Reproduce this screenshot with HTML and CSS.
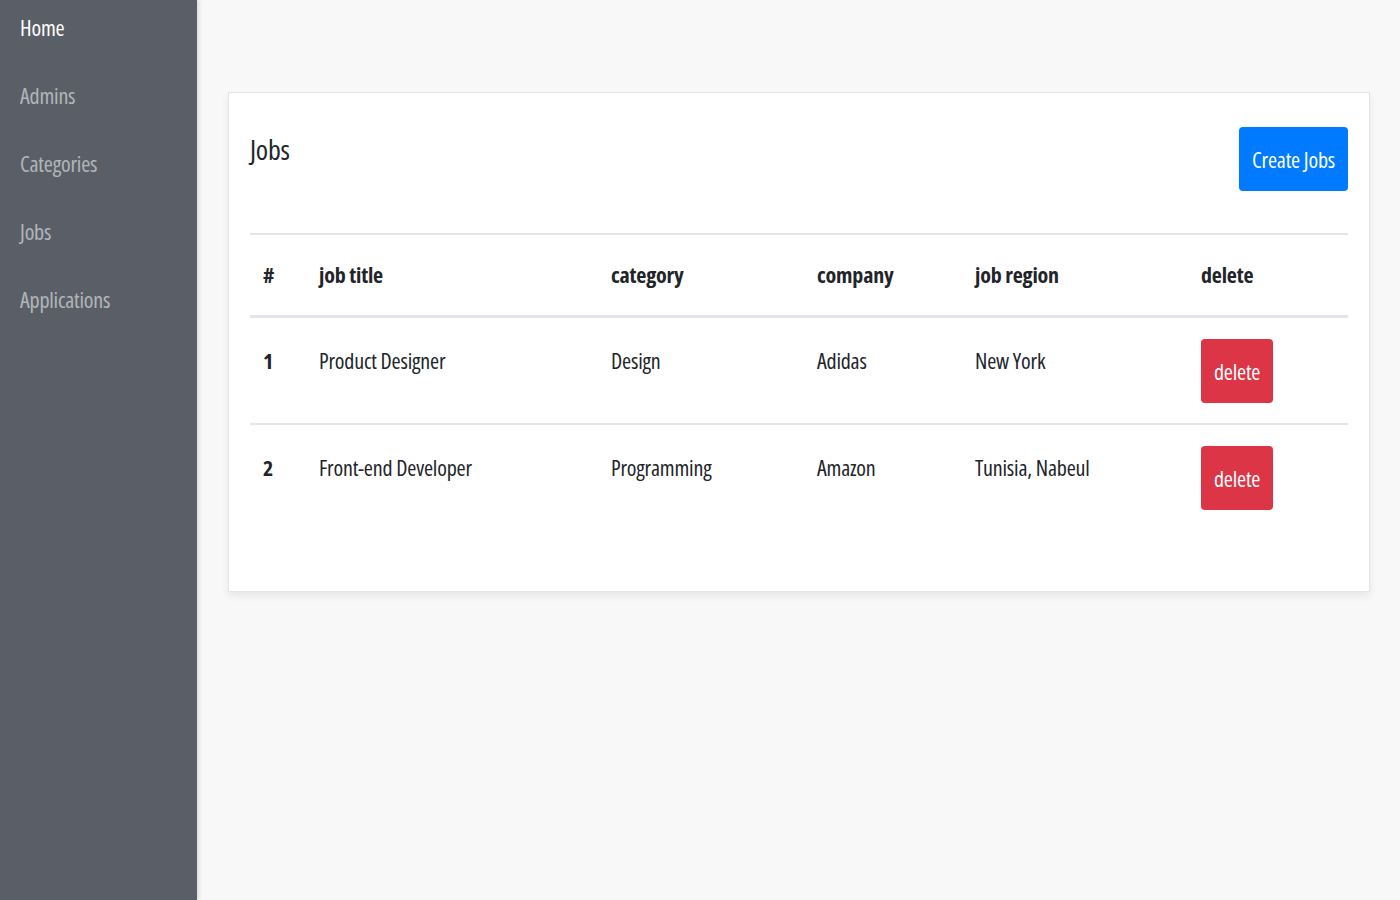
FILE: index.html
```html
<!DOCTYPE html>
<html lang="en">
<head>
<meta charset="utf-8">
<title>Jobs</title>
<link rel="stylesheet" href="styles.css">
</head>
<body>
<div class="app">
  <aside class="sidebar">
    <ul class="nav">
      <li><a class="nav-link active" href="#">Home</a></li>
      <li><a class="nav-link" href="#">Admins</a></li>
      <li><a class="nav-link" href="#">Categories</a></li>
      <li><a class="nav-link" href="#">Jobs</a></li>
      <li><a class="nav-link" href="#">Applications</a></li>
    </ul>
  </aside>
  <main class="main">
    <section class="card">
      <div class="card-header">
        <h4 class="card-title">Jobs</h4>
        <a class="btn btn-primary" href="#">Create Jobs</a>
      </div>
      <table class="table">
        <colgroup>
          <col class="c-num"><col class="c-title"><col class="c-cat"><col class="c-company"><col class="c-region"><col class="c-del">
        </colgroup>
        <thead>
          <tr><th>#</th><th>job title</th><th>category</th><th>company</th><th>job region</th><th>delete</th></tr>
        </thead>
        <tbody>
          <tr>
            <th>1</th><td>Product Designer</td><td>Design</td><td>Adidas</td><td>New York</td>
            <td><a class="btn btn-danger" href="#">delete</a></td>
          </tr>
          <tr>
            <th>2</th><td>Front-end Developer</td><td>Programming</td><td>Amazon</td><td>Tunisia, Nabeul</td>
            <td><a class="btn btn-danger" href="#">delete</a></td>
          </tr>
        </tbody>
      </table>
    </section>
  </main>
</div>
</body>
</html>
```
FILE: styles.css
```css
html, body {
  margin: 0;
  padding: 0;
}
body {
  font-family: "Open Sans", "Liberation Sans", Arial, sans-serif;
  font-stretch: 75%;
  font-size: 22px;
  letter-spacing: -0.2px;
  color: #212529;
  background: #f8f8f8;
}
.app {
  display: flex;
  min-height: 900px;
}
.sidebar {
  width: 197px;
  flex: 0 0 197px;
  background: #5a5f67;
  box-shadow: 2px 0 4px rgba(0, 0, 0, 0.12);
}
.nav {
  list-style: none;
  margin: 0;
  padding: 0;
}
.nav-link {
  display: block;
  padding: 13px 20px 27px;
  line-height: 28px;
  color: rgba(255, 255, 255, 0.55);
  text-decoration: none;
}
.nav-link.active {
  color: #ffffff;
}
.main {
  flex: 1;
  padding: 92px 30px 0 31px;
}
.card {
  background: #ffffff;
  border: 1px solid #e4e4e4;
  box-shadow: 0 4px 8px rgba(0, 0, 0, 0.07);
  padding: 34px 21px 61px;
}
.card-header {
  display: flex;
  justify-content: space-between;
  align-items: flex-start;
  margin-bottom: 42px;
}
.card-title {
  margin: 0;
  font-size: 28px;
  font-weight: 400;
  line-height: 44px;
  letter-spacing: -0.3px;
}
.btn {
  display: inline-block;
  padding: 11px 13px;
  line-height: 42px;
  color: #ffffff;
  text-decoration: none;
  border-radius: 4px;
  text-align: center;
}
.btn-primary {
  background: #007bff;
}
.btn-danger {
  background: #dc3545;
}
.table {
  width: 100%;
  border-collapse: collapse;
  table-layout: fixed;
}
.c-num { width: 56px; }
.c-title { width: 292px; }
.c-cat { width: 206px; }
.c-company { width: 158px; }
.c-region { width: 226px; }
.c-del { width: 160px; }
.table th,
.table td {
  text-align: left;
  vertical-align: top;
  padding: 21px 13px 20px;
  line-height: 42px;
}
.table thead th {
  font-weight: 700;
  padding: 17px 13px 19px;
  line-height: 44px;
  border-top: 2px solid #e2e5e9;
  border-bottom: 3px solid #e2e5e9;
}
.table tbody th {
  font-weight: 700;
}
.table tbody tr + tr th,
.table tbody tr + tr td {
  border-top: 2px solid #e2e5e9;
}
```
